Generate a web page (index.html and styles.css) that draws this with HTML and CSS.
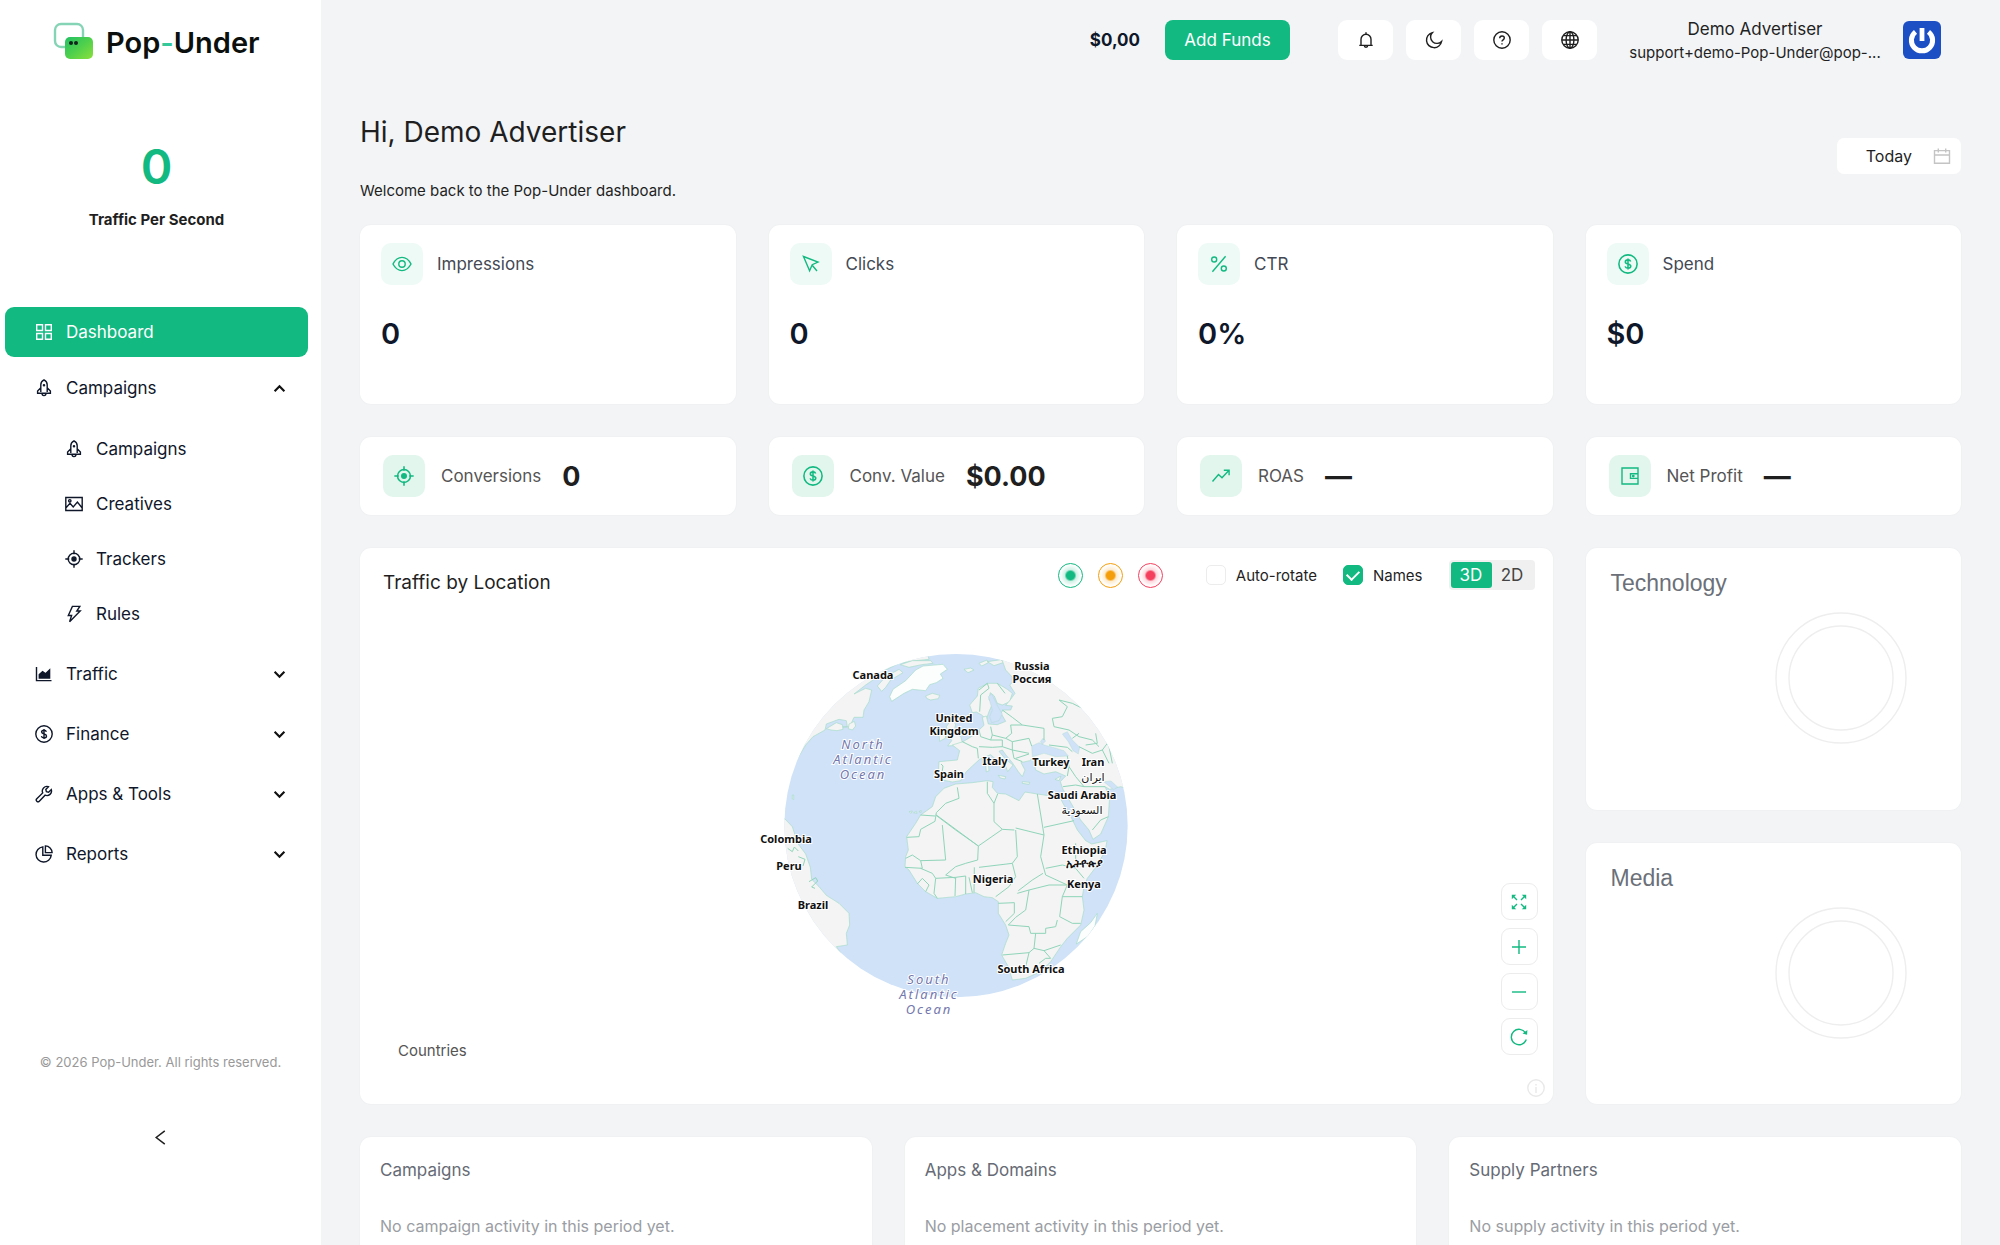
FILE: index.html
```html
<!DOCTYPE html>
<html lang="en">
<head>
<meta charset="utf-8">
<meta name="viewport" content="width=device-width, initial-scale=1">
<title>Pop-Under Dashboard</title>
<link rel="stylesheet" href="styles.css">
</head>
<body>
<svg class="sprite" aria-hidden="true">
  <symbol id="i-grid" viewBox="0 0 18 18"><path d="M1.7 1.7h5.8v5.8H1.7zM10.5 1.7h5.8v5.8h-5.8zM1.7 10.5h5.8v5.8H1.7zM10.5 10.5h5.8v5.8h-5.8z"/></symbol>
  <symbol id="i-rocket" viewBox="0 0 18 18"><path d="M5.800 13V5.800C5.800 3.600 7.300 1.800 9 .9c1.700.9 3.200 2.700 3.200 4.900V13M5.800 8.800 2.600 12v2.200h12.800V12l-3.200-3.200M7 14.300a2 2.300 0 0 0 4 0"/><circle cx="9" cy="6.300" r=".6"/></symbol>
  <symbol id="i-image" viewBox="0 0 18 18"><path d="M.8 2.500h16.400v13H.8zM.8 13l4.200-4.600 3.200 3.600L12.400 7l4.800 6"/><circle cx="4.800" cy="5.800" r="1.200"/></symbol>
  <symbol id="i-aim" viewBox="0 0 18 18"><circle cx="9" cy="9" r="5.800"/><circle cx="9" cy="9" r="2" fill="currentColor"/><path d="M9 .3v4M9 13.700v4M.3 9h4M13.700 9h4"/></symbol>
  <symbol id="i-bolt" viewBox="0 0 18 18"><path d="M7.400 1.400h7.400l-3 4.600h3.400L4.600 16.800l2-6.300H3.300z"/></symbol>
  <symbol id="i-area" viewBox="0 0 18 18"><path d="M1.500 2v13.600h15"/><path fill="currentColor" d="M4.300 13V9.600L7.600 6.600l3 2.200L14.600 5v8z"/></symbol>
  <symbol id="i-dollar" viewBox="0 0 18 18"><circle cx="9" cy="9" r="8.200"/><path d="M11.400 6.700C11 5.700 10.100 5.300 9 5.300c-1.400 0-2.400.7-2.400 1.800C6.600 9.500 11.500 8.400 11.500 10.900c0 1.200-1.100 1.900-2.500 1.900-1.300 0-2.300-.6-2.600-1.700M9 4v10"/></symbol>
  <symbol id="i-tool" viewBox="0 0 18 18"><path d="M16.300 4.600a4.600 4.600 0 0 1-6.200 5.600L4.300 16.200a1.700 1.700 0 0 1-2.500-2.500L7.700 7.900a4.600 4.600 0 0 1 5.700-6.200L10.800 4.400l.6 2.200 2.200.6z"/></symbol>
  <symbol id="i-pie" viewBox="0 0 18 18"><path d="M7.800 1.900a7.600 7.600 0 1 0 8.400 8.400H7.800z"/><path d="M10.400.9v6.700h6.700A6.800 6.800 0 0 0 10.400.9z"/></symbol>
  <symbol id="i-down" viewBox="0 0 12 12"><path d="m1.500 3.500 4.500 4.500 4.500-4.500"/></symbol>
  <symbol id="i-up" viewBox="0 0 12 12"><path d="m1.500 8.500 4.500-4.500 4.500 4.500"/></symbol>
  <symbol id="i-left" viewBox="0 0 14 14"><path d="M11 .8 3 7l8 6.200"/></symbol>
  <symbol id="i-bell" viewBox="0 0 18 18"><path d="M4 14.300V8.200a5 5 0 0 1 10 0v6.100M2.300 14.400h13.400M9 3.200V1.300M7.300 14.600a1.700 1.700 0 0 0 3.400 0"/></symbol>
  <symbol id="i-moon" viewBox="0 0 18 18"><path d="M7.300 1.700A7.600 7.600 0 1 0 16.600 10.400 5.900 5.900 0 0 1 7.300 1.700z"/></symbol>
  <symbol id="i-help" viewBox="0 0 18 18"><circle cx="9" cy="9" r="8.200"/><path d="M6.700 7.200c0-1.300 1-2.200 2.300-2.200s2.300.9 2.300 2.100c0 1.800-2.300 1.700-2.300 3.500"/><path d="M9 12.200v1.300"/></symbol>
  <symbol id="i-globe" viewBox="0 0 18 18"><circle cx="9" cy="9" r="8.200"/><ellipse cx="9" cy="9" rx="3.900" ry="8.200"/><path d="M.8 9h16.400M9 .8v16.400M2.400 4.600h13.200M2.400 13.400h13.200"/></symbol>
  <symbol id="i-calendar" viewBox="0 0 18 18"><path d="M1.500 3.600h15v12.600h-15zM1.500 8h15M5.300 1.500v4M12.700 1.500v4"/></symbol>
  <symbol id="i-eye" viewBox="0 0 20 20"><path d="M1 10c2.200-4.300 5.200-6.600 9-6.600s6.800 2.300 9 6.600c-2.200 4.300-5.200 6.600-9 6.600S3.200 14.300 1 10z"/><circle cx="10" cy="10" r="3.200"/></symbol>
  <symbol id="i-cursor" viewBox="0 0 20 20"><path d="m2.500 2.500 14.500 5.600-5.800 2.600-2.600 6zM10.800 10.800l5.200 6.200"/></symbol>
  <symbol id="i-percent" viewBox="0 0 20 20"><circle cx="5.200" cy="5.500" r="2.500"/><circle cx="14.800" cy="14.500" r="2.500"/><path d="M16.600 2.300 3.400 17.700"/></symbol>
  <symbol id="i-rise" viewBox="0 0 20 20"><path d="m1.500 15.500 6-7 3.500 3.200 6.800-7.200M12.800 4.300h5.300v5"/></symbol>
  <symbol id="i-wallet" viewBox="0 0 20 20"><path d="M2 2h16v16H2zM18 7.800h-7.500v4.600H18"/><circle cx="13.300" cy="10.100" r=".7"/></symbol>
  <symbol id="i-expand" viewBox="0 0 18 18"><path d="m3 3 4 4M15 3l-4 4M3 15l4-4M15 15l-4-4"/><path fill="currentColor" stroke="none" d="M1.800 1.800h4.400L1.800 6.200zM16.200 1.800h-4.400l4.400 4.400zM1.800 16.200h4.400l-4.400-4.400zM16.200 16.200h-4.400l4.400-4.400z"/></symbol>
  <symbol id="i-plus" viewBox="0 0 18 18"><path d="M9 2v14M2 9h14"/></symbol>
  <symbol id="i-minus" viewBox="0 0 18 18"><path d="M2 9h14"/></symbol>
  <symbol id="i-reload" viewBox="0 0 18 18"><path d="M16.300 11.600A7.700 7.700 0 1 1 15.600 5"/><path fill="currentColor" stroke="none" d="m17.400 2-.3 4.800-4.600-1.200z"/></symbol>
  <symbol id="i-info" viewBox="0 0 18 18"><circle cx="9" cy="9" r="8.200"/><path d="M9 8v6M9 5v1.500"/></symbol>
</svg>

<div class="app">
  <aside class="sidebar">
    <a class="brand" href="#" aria-label="Pop-Under home">
      <svg class="brand-mark" viewBox="0 0 40 38" aria-hidden="true">
        <defs><linearGradient id="lg" x1="0" y1="0" x2="1" y2="1"><stop offset="0" stop-color="#22c065"/><stop offset=".5" stop-color="#4fd04c"/><stop offset="1" stop-color="#8be03a"/></linearGradient></defs>
        <rect x="2" y="2" width="28" height="23" rx="6" fill="#fff" stroke="#86d4b6" stroke-width="2.400"/>
        <rect x="12" y="15" width="28" height="22" rx="5" fill="url(#lg)"/>
        <circle cx="18" cy="21" r="2" fill="#10241a"/><circle cx="23" cy="21" r="2" fill="#10241a"/>
      </svg>
      <span class="brand-name">Pop<span class="brand-dash">-</span>Under</span>
    </a>
    <div class="rate">
      <span class="rate-value">0</span>
      <span class="rate-label">Traffic Per Second</span>
    </div>
    <nav class="menu">
      <a class="item active" href="#"><svg class="ico"><use href="#i-grid"/></svg>Dashboard</a>
      <div class="groups">
        <div class="group">
          <button class="item" type="button" aria-expanded="true"><svg class="ico"><use href="#i-rocket"/></svg>Campaigns<svg class="chev"><use href="#i-up"/></svg></button>
          <div class="sub">
            <a class="item" href="#"><svg class="ico"><use href="#i-rocket"/></svg>Campaigns</a>
            <a class="item" href="#"><svg class="ico"><use href="#i-image"/></svg>Creatives</a>
            <a class="item" href="#"><svg class="ico"><use href="#i-aim"/></svg>Trackers</a>
            <a class="item" href="#"><svg class="ico"><use href="#i-bolt"/></svg>Rules</a>
          </div>
        </div>
        <button class="item" type="button"><svg class="ico"><use href="#i-area"/></svg>Traffic<svg class="chev"><use href="#i-down"/></svg></button>
        <button class="item" type="button"><svg class="ico"><use href="#i-dollar"/></svg>Finance<svg class="chev"><use href="#i-down"/></svg></button>
        <button class="item" type="button"><svg class="ico"><use href="#i-tool"/></svg>Apps &amp; Tools<svg class="chev"><use href="#i-down"/></svg></button>
        <button class="item" type="button"><svg class="ico"><use href="#i-pie"/></svg>Reports<svg class="chev"><use href="#i-down"/></svg></button>
      </div>
    </nav>
    <p class="copyright">© 2026 Pop-Under. All rights reserved.</p>
    <button class="collapse" type="button" aria-label="Collapse menu"><svg><use href="#i-left"/></svg></button>
  </aside>

  <div class="content">
    <header class="topbar">
      <strong class="balance">$0,00</strong>
      <button class="fund" type="button">Add Funds</button>
      <div class="tools">
        <button type="button" aria-label="Notifications"><svg class="ico"><use href="#i-bell"/></svg></button>
        <button type="button" aria-label="Dark mode"><svg class="ico"><use href="#i-moon"/></svg></button>
        <button type="button" aria-label="Help"><svg class="ico"><use href="#i-help"/></svg></button>
        <button type="button" aria-label="Language"><svg class="ico"><use href="#i-globe"/></svg></button>
      </div>
      <div class="user">
        <span class="user-name">Demo Advertiser</span>
        <span class="user-mail">support+demo-Pop-Under@pop-...</span>
      </div>
      <svg class="avatar" viewBox="0 0 38 38" role="img" aria-label="Avatar"><rect width="38" height="38" rx="6" fill="#1d4fc4"/><path d="M12.500 10.900A10.600 10.600 0 1 0 25.500 10.900" fill="none" stroke="#fff" stroke-width="5"/><path d="M16.600 7h4.800v13h-4.800z" fill="#fff"/></svg>
    </header>

    <main class="main">
      <section class="intro">
        <div class="intro-text">
          <h1>Hi, Demo Advertiser</h1>
          <p>Welcome back to the Pop-Under dashboard.</p>
        </div>
        <button class="date" type="button">Today<svg class="ico"><use href="#i-calendar"/></svg></button>
      </section>

      <section class="grid">
        <article class="card stat"><div class="stat-head"><span class="tile"><svg><use href="#i-eye"/></svg></span>Impressions</div><strong>0</strong></article>
        <article class="card stat"><div class="stat-head"><span class="tile"><svg><use href="#i-cursor"/></svg></span>Clicks</div><strong>0</strong></article>
        <article class="card stat"><div class="stat-head"><span class="tile"><svg><use href="#i-percent"/></svg></span>CTR</div><strong>0%</strong></article>
        <article class="card stat"><div class="stat-head"><span class="tile"><svg><use href="#i-dollar"/></svg></span>Spend</div><strong>$0</strong></article>

        <article class="card mini"><span class="tile"><svg><use href="#i-aim"/></svg></span><span>Conversions</span><strong>0</strong></article>
        <article class="card mini"><span class="tile"><svg><use href="#i-dollar"/></svg></span><span>Conv. Value</span><strong>$0.00</strong></article>
        <article class="card mini"><span class="tile"><svg><use href="#i-rise"/></svg></span><span>ROAS</span><strong>—</strong></article>
        <article class="card mini"><span class="tile"><svg><use href="#i-wallet"/></svg></span><span>Net Profit</span><strong>—</strong></article>

        <article class="card map">
          <div class="map-head">
            <h2>Traffic by Location</h2>
            <div class="pulses"><i class="pulse green"></i><i class="pulse amber"></i><i class="pulse red"></i></div>
            <label class="check"><input type="checkbox">Auto-rotate</label>
            <label class="check"><input type="checkbox" checked>Names</label>
            <div class="seg">
              <label><input type="radio" name="view" checked><span>3D</span></label>
              <label><input type="radio" name="view"><span>2D</span></label>
            </div>
          </div>
          <svg class="globe" viewBox="12 0 410 400" role="img" aria-label="Globe centred on Africa">
            <svg width="410" height="400" x="0" y="0" viewBox="0 0 1230 1200">
              <defs><clipPath id="disc"><circle cx="651" cy="587" r="515"/></clipPath></defs>
              <circle cx="651" cy="587" r="515" fill="#cfe2f7"/>
              <g clip-path="url(#disc)">
                <g class="land">
                  <path d="M120 460 180 378 200 345 222 320 258 300 262 282 300 268 322 272 325 290 300 292 332 290 345 262 372 262 375 240 390 215 398 180 380 175 345 192 380 165 402 150 440 120 480 100 530 92 570 88 560 50 300 50 80 250z"/>
                  <path d="m330 282 16-8 4 14-10 12-12-4zM262 296l30-18 18 6 2 14-18 4-18-2z"/>
                  <path d="M415 168 440 140 480 118 492 128 455 150 440 172 428 184z"/>
                  <path d="M484 104 520 92 575 92 582 100 548 104 510 112zM675 118l20-4 10 6-18 8zM720 100l24-10 4 8-20 10zM745 95l40-6 10 8-30 10z"/>
                  <path d="M560 198 580 190 602 196 598 206 575 210 563 205z"/>
                  <path d="m622 290 14-20 14 12-4 20 20 20 4 16-16 8-28 2 12-16-10-18zM600 312l18-6 2 18-18 10z"/>
                  <path d="M746 160 775 160 805 178 820 190 812 215 790 225 775 220 766 198 754 188 750 208 760 222 750 245 742 268 728 255 712 246 700 248 692 225 715 198 718 175z"/>
                  <path d="M600 395 655 390 662 362 640 345 672 335 700 318 722 298 735 286 730 262 742 258 748 282 775 284 800 274 786 250 792 240 815 240 820 228 800 226 812 212 828 190 812 165 828 150 800 120 790 92 800 60 1200 60 1250 500 1145 470 1112 478 1098 470 1112 500 1108 560 1085 612 1062 628 1050 600 1025 570 985 500 972 478 964 455 980 438 950 425 915 432 890 420 885 400 886 382 872 392 846 398 858 420 850 440 838 425 820 398 800 374 790 360 780 364 800 388 822 405 806 425 800 408 775 392 755 374 722 388 700 408 682 425 665 452 640 456 610 450 598 430z"/>
                  <path d="M778 436 800 440 798 447 784 444zM740 402l8-2 2 22-8 4zM850 455l22 2-2 6-20-3zM948 448l18-10-6 14z"/>
                  <path d="M628 470 650 462 700 458 745 452 762 455 760 472 775 490 800 492 840 512 858 486 895 492 930 497 958 493 972 520 998 565 1015 600 1040 632 1058 642 1104 632 1098 665 1070 712 1045 745 1035 770 1030 800 1035 840 1025 885 985 925 965 950 935 995 905 1025 860 1045 820 1050 808 1010 788 975 800 940 810 915 800 885 778 850 778 815 760 803 735 800 710 788 680 792 650 800 595 805 560 785 535 760 510 720 498 710 500 680 508 660 503 620 530 580 545 555 580 530 590 500 615 475z"/>
                  <path d="M136 565 160 590 176 640 200 672 214 712 218 748 240 770 262 796 300 820 330 850 332 885 322 910 325 945 292 950 306 970 200 1010 80 700z"/>
                  <path d="m510 545 10-2-4 7zM524 548l8-4 2 6zM540 545l6-4v6zM160 495l4 0 0 14-4-2z"/>
                </g>
                <path class="ice" d="M452 200 462 178 500 152 530 120 552 108 612 103 625 118 604 132 612 145 592 158 572 164 560 182 520 178 495 190 458 214z"/>
                <path class="ice" d="M1075 850 1068 888 1048 918 1012 942 1025 905 1055 878z"/>
                <g class="sea">
                  <path d="M878 348 900 338 918 346 935 350 975 362 988 378 950 380 915 370 880 380zM912 325l8 8-10 10-6-8z"/>
                  <path d="M985 305 1000 330 1022 352 1018 372 1002 362 988 335 970 312zM1094 455l30 24 12-8-20-18z"/>
                  <path d="M748 200l10-8 20 40 12 20-10 20-22 6-6-18 8-20z"/>
                </g>
                <g class="borders">
                  <path d="M655 472 660 505 620 520 592 548 588 574 545 598 540 620 503 622M592 555 718 648 790 598 826 600M610 585 620 690 545 692M545 555 588 558M590 555 650 600 718 648 716 690 680 700 650 710 620 735M745 455 745 490 765 520 765 575 790 598M776 492 765 520M895 492 915 615 830 594M915 592 1005 572M830 600 835 680 820 700 720 712M915 615 905 680 920 735 985 765M820 700 830 740 810 770 770 800M838 782 880 750 912 730M835 790 870 780 930 765 985 765M870 780 860 840 830 862 808 885M778 820 826 818 826 850 800 875M545 692 520 675 500 685M545 692 550 715 498 712M545 715 580 730 590 745 650 742M590 745 585 790 595 805M560 785 570 765 550 745 535 762M650 742 648 798M650 742 680 738 680 792M690 742 700 788M620 735 650 745M706 712 705 788M920 715 970 705 1010 715 1035 745M1010 640 1010 690M985 765 970 800 1030 800M970 800 962 860 1000 880 1025 880M808 885 870 890 875 910 920 910 920 895 950 890 955 870M890 910 885 955 915 962 965 945M790 975 870 968 885 955M870 968 860 1010 835 1020M915 962 935 985M900 1000 920 985 935 985"/>
                  <path d="M720 180 745 160 750 175 725 195 722 245M775 160 798 190M790 240 820 262 850 285 915 295 915 330M755 290 760 315 800 325 818 310 815 285 850 285M720 300 725 320 755 330 760 315M755 330 790 330 790 350 760 352 720 350M800 325 820 335 870 325 878 348M820 335 820 360 870 370M790 350 820 360 825 385 850 395M670 335 700 350 715 355 718 385M830 385 870 372M960 210 985 230 970 260 940 265 945 290 990 300M960 210 1000 220 1040 240 1080 290 1110 350 1120 400M990 300 1020 320 1060 330 1080 350M1020 350 1060 370 1090 360 1110 400M930 345 985 352 1000 365M985 378 990 410 985 438M990 410 1010 440 1035 470 1098 470M972 470 1010 465 1035 470M1060 600 1085 570 1108 560M1020 310 1000 325M1105 340 1090 360M1070 310 1075 340 1040 345M606 402 612 408 606 448"/>
                  <path d="M146 655l14 10 6-14 12 12M178 680l20 8-6 20M210 755l20-12 6 10-18 18 10 4"/>
                </g>
              </g>
            </svg>
            <g class="names">
              <text x="134" y="49">Canada</text>
              <text x="293" y="40">Russia<tspan x="293" dy="13">Россия</tspan></text>
              <text x="215" y="92">United<tspan x="215" dy="13">Kingdom</tspan></text>
              <text x="256" y="135">Italy</text>
              <text x="210" y="148">Spain</text>
              <text x="312" y="136">Turkey</text>
              <text x="354" y="136">Iran</text>
              <text class="thin" x="354" y="151">ایران</text>
              <text x="343" y="169">Saudi Arabia</text>
              <text class="thin" x="343" y="184">السعودية</text>
              <text x="47" y="213">Colombia</text>
              <text x="50" y="240">Peru</text>
              <text x="74" y="279">Brazil</text>
              <text x="254" y="253">Nigeria</text>
              <text x="345" y="224">Ethiopia<tspan x="345" dy="13">ኢትዮጵያ</tspan></text>
              <text x="345" y="258">Kenya</text>
              <text x="292" y="343">South Africa</text>
            </g>
            <g class="oceans">
              <text x="124" y="119">North<tspan x="124" dy="15">Atlantic</tspan><tspan x="124" dy="15">Ocean</tspan></text>
              <text x="190" y="354">South<tspan x="190" dy="15">Atlantic</tspan><tspan x="190" dy="15">Ocean</tspan></text>
            </g>
          </svg>
          <p class="map-foot">Countries</p>
          <div class="map-tools">
            <button type="button" aria-label="Fit"><svg class="ico"><use href="#i-expand"/></svg></button>
            <button type="button" aria-label="Zoom in"><svg class="ico"><use href="#i-plus"/></svg></button>
            <button type="button" aria-label="Zoom out"><svg class="ico"><use href="#i-minus"/></svg></button>
            <button type="button" aria-label="Reset"><svg class="ico"><use href="#i-reload"/></svg></button>
          </div>
          <button class="map-info" type="button" aria-label="Attribution"><svg class="ico"><use href="#i-info"/></svg></button>
        </article>
        <div class="side">
          <article class="card ring"><h2>Technology</h2><svg viewBox="0 0 134 134" aria-hidden="true"><circle cx="67" cy="67" r="65"/><circle cx="67" cy="67" r="52"/></svg></article>
          <article class="card ring"><h2>Media</h2><svg viewBox="0 0 134 134" aria-hidden="true"><circle cx="67" cy="67" r="65"/><circle cx="67" cy="67" r="52"/></svg></article>
        </div>
      </section>

      <section class="lists">
        <article class="card list"><h3>Campaigns</h3><p>No campaign activity in this period yet.</p></article>
        <article class="card list"><h3>Apps &amp; Domains</h3><p>No placement activity in this period yet.</p></article>
        <article class="card list"><h3>Supply Partners</h3><p>No supply activity in this period yet.</p></article>
      </section>
    </main>
  </div>
</div>
</body>
</html>
```
FILE: styles.css
```css
:root {
  --green: #12b981;
  --page: #f2f4f6;
  --ink: #1f1f1f;
  --navy: #0f172a;
}

* { box-sizing: border-box; }

body {
  margin: 0;
  background: var(--page);
  color: var(--ink);
  font-family: Inter, "Liberation Sans", sans-serif;
  font-size: 17px;
}

h1, h2, h3, p { margin: 0; font-weight: 400; }
button { border: 0; padding: 0; background: none; color: inherit; font: inherit; cursor: pointer; }
a { color: inherit; text-decoration: none; }
.sprite { display: none; }
svg { display: block; fill: none; stroke: currentColor; stroke-width: 1.4; }
.ico { width: 18px; height: 18px; flex: none; }

.app { display: flex; height: 100vh; overflow: hidden; }

/* Sidebar */
.sidebar {
  flex: none;
  width: 321px;
  display: flex;
  flex-direction: column;
  background: #fff;
}
.brand { display: flex; align-items: center; gap: 13px; height: 82px; padding-left: 53px; }
.brand-mark { width: 40px; height: 38px; stroke: none; }
.brand-name { padding-top: 2px; font-size: 29px; font-weight: 600; color: #0b0f0d; }
.brand-dash { color: #34c99a; }
.rate { display: flex; flex-direction: column; align-items: center; gap: 12px; padding: 55px 8px 0 0; }
.rate-value { font-size: 48px; line-height: 60px; font-weight: 600; color: var(--green); }
.rate-label { font-size: 15px; line-height: 22px; font-weight: 700; }
.menu { margin: 76px 13px 0 5px; color: var(--navy); }
.item {
  display: flex;
  align-items: center;
  gap: 13px;
  width: 100%;
  height: 50px;
  padding: 0 22px 0 30px;
  border-radius: 9px;
  text-align: left;
}
.item.active { background: var(--green); color: #fff; }
.groups { display: flex; flex-direction: column; gap: 10px; margin-top: 6px; }
.sub { display: flex; flex-direction: column; gap: 5px; margin-top: 11px; }
.sub .item { padding-left: 60px; }
.chev { width: 13px; height: 13px; margin-left: auto; stroke-width: 2; color: #111; }
.copyright { margin-top: 173px; text-align: center; font-size: 13px; line-height: 20px; color: #999; }
.collapse { align-self: center; margin-top: 56px; padding: 2px; }
.collapse svg { width: 15px; height: 15px; }

/* Top bar */
.content { flex: 1; min-width: 0; padding: 0 39px; overflow: hidden; }
.topbar { display: flex; align-items: center; justify-content: flex-end; height: 80px; padding-right: 20px; }
.balance { font-weight: 700; color: var(--navy); }
.fund { width: 125px; height: 40px; margin-left: 25px; border-radius: 8px; background: var(--green); color: #fff; }
.tools { display: flex; gap: 13px; margin: 0 31px 0 48px; }
.tools button { display: grid; place-items: center; width: 55px; height: 40px; border-radius: 9px; background: #fff; }
.user { width: 254px; margin-right: 21px; padding-top: 2px; text-align: center; }
.user span { display: block; white-space: nowrap; }
.user-name { line-height: 24px; }
.user-mail { font-size: 15px; line-height: 24px; }
.avatar { width: 38px; height: 38px; stroke: none; }

/* Intro */
.intro { display: flex; justify-content: space-between; align-items: center; height: 145px; }
.intro h1 { font-size: 28px; line-height: 40px; }
.intro p { margin-top: 29px; font-size: 15px; line-height: 20px; }
.intro-text { padding-top: 8px; }
.date {
  display: flex;
  align-items: center;
  gap: 21px;
  height: 36px;
  margin-top: 6px;
  padding: 0 10px 0 29px;
  border-radius: 7px;
  background: #fff;
  font-size: 16px;
}
.date .ico { color: #c4c4c4; }

/* Cards */
.grid { display: grid; grid-template-columns: repeat(4, minmax(0, 1fr)); gap: 33px; }
.card { border-radius: 11px; background: #fff; box-shadow: 0 0 2px rgba(15, 23, 42, .05); }
.tile { display: grid; place-items: center; flex: none; width: 42px; height: 42px; border-radius: 10px; background: #eefaf6; color: var(--green); }
.tile svg { width: 20px; height: 20px; }
.stat { height: 179px; padding: 18px 21px; }
.stat-head { display: flex; align-items: center; gap: 14px; color: #434954; }
.stat strong { display: block; margin-top: 29px; font-size: 29px; line-height: 40px; font-weight: 600; color: var(--navy); }
.mini { display: flex; align-items: center; height: 78px; padding-left: 23px; color: #555; }
.mini .tile { margin-right: 16px; background: #e3f6ee; }
.mini strong { margin-left: 21px; font-size: 27px; font-weight: 700; color: var(--ink); }

/* Map */
.map { position: relative; grid-column: span 3; display: flex; flex-direction: column; height: 556px; }
.map-head { display: flex; align-items: center; height: 54px; padding: 0 18px 0 23px; }
.map-head h2 { margin: 16px auto 0 0; font-size: 19px; line-height: 26px; }
.pulses { display: flex; gap: 15px; margin-right: 43px; }
.pulse { width: 25px; height: 25px; border: 1px solid; border-radius: 50%; }
.green { color: #12b981; background: radial-gradient(circle, #12b981 4px, #12b98133 6px, #12b98111 9px, #fff 11px); }
.amber { color: #f59e0b; background: radial-gradient(circle, #f59e0b 4px, #f59e0b33 6px, #f59e0b11 9px, #fff 11px); }
.red { color: #f43f5e; background: radial-gradient(circle, #f43f5e 4px, #f43f5e33 6px, #f43f5e11 9px, #fff 11px); }
.check { display: flex; align-items: center; gap: 10px; margin-right: 26px; font-size: 15px; }
.check input { appearance: none; display: grid; place-items: center; width: 20px; height: 20px; margin: 0; border: 1px solid #ececec; border-radius: 5px; }
.check input:checked { border-color: var(--green); background: var(--green); }
.check input:checked::after { content: ""; width: 6px; height: 10px; margin-top: -3px; border: solid #fff; border-width: 0 2px 2px 0; transform: rotate(45deg); }
.seg { display: flex; padding: 2px; border-radius: 4px; background: #f0f0f0; }
.seg input { position: absolute; opacity: 0; }
.seg span { display: block; width: 41px; line-height: 26px; border-radius: 3px; text-align: center; color: #444; }
.seg input:checked + span { background: var(--green); color: #fff; }
.globe { width: 410px; height: 400px; margin: 28px auto 0; stroke: none; }
.globe svg { stroke: none; }
.land { fill: #f3f4f3; stroke: #a5dcc8; stroke-width: 2; }
.ice { fill: #fcfdfd; stroke: #a5dcc8; stroke-width: 2; }
.sea { fill: #cfe2f7; stroke: #a5dcc8; stroke-width: 1; }
.borders { fill: none; stroke: #8fd4ba; stroke-width: 3; stroke-linejoin: round; }
.names { font: 700 11px "Noto Sans", "DejaVu Sans", sans-serif; fill: #111; stroke: #fff; stroke-width: 2; paint-order: stroke; text-anchor: middle; }
.names .thin { font-weight: 400; }
.oceans { font: italic 13px "Noto Sans", sans-serif; letter-spacing: 2px; fill: #7478ad; stroke: #fff; stroke-width: 2; paint-order: stroke; text-anchor: middle; }
.map-foot { margin: 11px 0 0 38px; font-size: 15px; line-height: 20px; color: #555; }
.map-tools { position: absolute; right: 15px; bottom: 49px; display: flex; flex-direction: column; gap: 8px; color: var(--green); }
.map-tools button { display: grid; place-items: center; width: 37px; height: 37px; border: 1px solid #ececec; border-radius: 9px; background: #fff; }
.map-info { position: absolute; right: 8px; bottom: 7px; color: #e9e9e9; }

/* Ring cards */
.side { display: grid; gap: 33px; }
.ring { padding: 21px 25px; }
.ring h2 { font: 23px/28px "Liberation Sans", sans-serif; color: #6b7079; }
.ring svg { width: 134px; height: 134px; margin: 14px 28px 0 auto; stroke: #eee; }

/* Activity lists */
.lists { display: grid; grid-template-columns: repeat(3, minmax(0, 1fr)); gap: 33px; margin-top: 33px; }
.list { min-height: 160px; padding: 21px 20px; line-height: 24px; }
.list h3 { font-size: 17px; color: #666b75; }
.list p { margin-top: 32px; font-size: 16px; color: #9a9da3; }
```
